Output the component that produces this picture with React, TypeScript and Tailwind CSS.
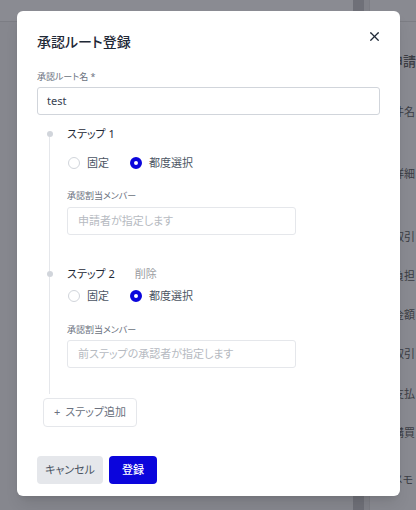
import { X } from 'lucide-react'

const font = "font-['Noto_Sans','Noto_Sans_CJK_JP',sans-serif] [font-feature-settings:'palt']"

function Radio({ checked, label }: { checked?: boolean; label: string }) {
  return (
    <label className="flex items-center gap-[7px]">
      <span
        className={
          checked
            ? 'h-[12px] w-[12px] rounded-full border-[4px] border-[#0b05dc] bg-white'
            : 'h-[12px] w-[12px] rounded-full border border-[#d1d5db] bg-white'
        }
      />
      <span className="text-[11px] leading-[16px] text-[#4b5563]">{label}</span>
    </label>
  )
}

function Step({ title, first, placeholder }: { title: string; first?: boolean; placeholder: string }) {
  return (
    <div className="flex">
      {/* timeline rail */}
      <div className="flex w-[25px] flex-col items-center">
        <div className={first ? 'h-[5px] w-px' : 'h-[5px] w-px bg-[#e5e7eb]'} />
        <div className="h-[6px] w-[6px] rounded-full bg-[#d1d5db]" />
        <div className="w-px flex-1 bg-[#e5e7eb]" />
      </div>

      <div className={first ? 'ml-[5px] flex-1 pb-[31px]' : 'ml-[5px] flex-1 pb-[26px]'}>
        <div className="flex h-[16px] items-center gap-[20px]">
          <span className="text-[11px] leading-[16px] text-[#1f2937]">{title}</span>
          {!first && <span className="text-[11px] leading-[16px] text-[#9a9ca1]">削除</span>}
        </div>

        <div className={first ? 'ml-px mt-[13px] flex gap-[21px]' : 'ml-px mt-[6px] flex gap-[21px]'}>
          <Radio label="固定" />
          <Radio checked label="都度選択" />
        </div>

        <p className={first ? 'mt-[19px] text-[9px] leading-[12px] text-[#6b7280]' : 'mt-[20px] text-[9px] leading-[12px] text-[#6b7280]'}>
          承認割当メンバー
        </p>
        <div
          className={
            first
              ? 'mt-[5px] flex h-[28px] w-[229px] items-center rounded-[3px] border border-[#e5e7eb] px-[10px] text-[11px] text-[#b6bac1]'
              : 'mt-[4px] flex h-[28px] w-[229px] items-center rounded-[3px] border border-[#e5e7eb] px-[10px] text-[11px] text-[#b6bac1]'
          }
        >
          {placeholder}
        </div>
      </div>
    </div>
  )
}

export default function App() {
  return (
    <div className={`relative h-[510px] w-[416px] overflow-hidden bg-[#86878e] ${font}`}>
      {/* dimmed page behind the dialog */}
      <div className="flex h-full">
        <div className="w-[353px] shrink-0">
          <div className="h-[22px] border-b border-[#7c7d84] bg-[#8a8b92]" />
        </div>
        <div className="w-[11px] shrink-0 bg-[#6f7078]" />
        <div className="w-[6px] shrink-0 border-r border-[#7c7d84] bg-[#818289]" />
        <div className="min-w-0 flex-1 overflow-hidden whitespace-nowrap bg-[#898a91]">
          <div className="h-[22px] border-b border-[#7c7d84]" />
          <div className="pl-[20px] text-[11px] leading-[14px] text-[#3b3d44]">
            <p className="mt-[30px] text-[13px] font-medium leading-[18px]">申請</p>
            <div className="pl-[3px]">
              <p className="mt-[35px]">件名</p>
              <p className="mt-[48px]">詳細</p>
              <p className="mt-[49px]">取引</p>
              <p className="mt-[25px]">負担</p>
              <p className="mt-[25px]">金額</p>
              <p className="mt-[25px]">取引</p>
              <p className="mt-[26px]">支払</p>
              <p className="mt-[25px]">購買</p>
              <p className="mt-[33px]">メモ</p>
            </div>
          </div>
        </div>
      </div>

      {/* dialog */}
      <div className="absolute left-[17px] top-[11px] w-[383px] rounded-[6px] bg-white px-5 pb-[12px] pt-[21px] shadow-lg">
        <div className="flex items-start justify-between">
          <h2 className="text-[14px] font-medium leading-[20px] text-[#1f2937]">承認ルート登録</h2>
          <button className="-mr-[2px] -mt-[3px] text-[#1f2937]">
            <X size={15} strokeWidth={2} />
          </button>
        </div>

        <p className="mt-[19px] text-[9px] leading-[12px] text-[#6b7280]">承認ルート名 *</p>
        <div className="mt-[4px] flex h-[28px] items-center rounded-[3px] border border-[#d1d5db] px-[9px] text-[11px] text-[#374151]">
          test
        </div>

        <div className="mt-[11px]">
          <Step first title="ステップ 1" placeholder="申請者が指定します" />
          <Step title="ステップ 2" placeholder="前ステップの承認者が指定します" />
        </div>

        <button className="ml-[6px] mt-[4px] flex h-[29px] w-[94px] items-center justify-center gap-[5px] rounded-[4px] border border-[#e5e7eb] text-[11px] text-[#6b7280]">
          <span>+</span>
          <span>ステップ追加</span>
        </button>

        <div className="mt-[29px] flex gap-[6px]">
          <button className="h-[28px] w-[66px] rounded-[4px] bg-[#e5e7eb] text-[11px] text-[#4b5563]">キャンセル</button>
          <button className="h-[28px] w-[48px] rounded-[4px] bg-[#0b05dc] text-[11px] font-medium text-white">登録</button>
        </div>
      </div>
    </div>
  )
}
